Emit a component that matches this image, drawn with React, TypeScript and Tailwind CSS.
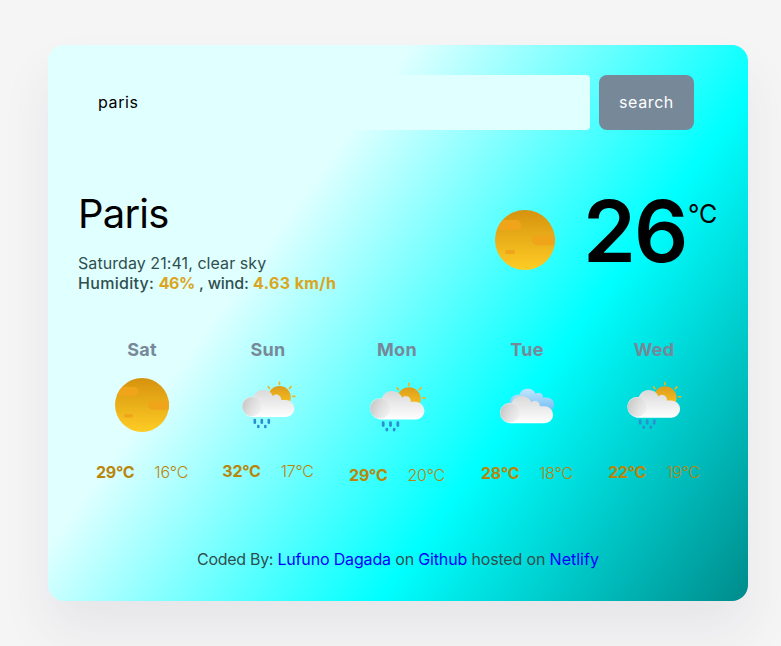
import React from "react";

const CLOUD =
  "M64 141A32 32 0 0 1 36 109A29 29 0 0 1 70 80A31 31 0 0 1 128 78A14.500 14.500 0 0 1 153 90H167A25.500 25.500 0 0 1 167 141Z";

function SunIcon({ id, size }: { id: string; size: number }) {
  return (
    <svg width={size} height={size} viewBox="0 0 100 100" className="block shrink-0">
      <defs>
        <linearGradient id={`${id}-sun`} x1="0" y1="0" x2="0" y2="1">
          <stop offset="0" stopColor="#d6920e" />
          <stop offset="1" stopColor="#fecd25" />
        </linearGradient>
        <clipPath id={`${id}-clip`}>
          <circle cx="50" cy="50" r="30" />
        </clipPath>
      </defs>
      <circle cx="50" cy="50" r="30" fill={`url(#${id}-sun)`} />
      <g clipPath={`url(#${id}-clip)`} fill="#efa41a">
        <rect x="15" y="30" width="31" height="10" rx="5" />
        <rect x="57" y="45.500" width="30" height="9.700" rx="4.800" />
        <rect x="30" y="60" width="10" height="4" rx="2" />
      </g>
    </svg>
  );
}

function CloudDefs({ id }: { id: string }) {
  return (
    <defs>
      <linearGradient id={`${id}-cloud`} x1="0" y1="0" x2="0" y2="1">
        <stop offset="0" stopColor="#d9d9d9" />
        <stop offset="1" stopColor="#ffffff" />
      </linearGradient>
      <linearGradient id={`${id}-shade`} x1="0" y1="0.300" x2="1" y2="0.600">
        <stop offset="0" stopColor="#c6c6c6" />
        <stop offset="1" stopColor="#e6e6e6" stopOpacity="0.400" />
      </linearGradient>
      <linearGradient id={`${id}-sun`} x1="0" y1="0" x2="0" y2="1">
        <stop offset="0" stopColor="#dd9c1c" />
        <stop offset="1" stopColor="#fdc921" />
      </linearGradient>
      <linearGradient id={`${id}-blue`} x1="0" y1="0" x2="0" y2="1">
        <stop offset="0" stopColor="#c4e6fc" />
        <stop offset="1" stopColor="#6cbcf5" />
      </linearGradient>
    </defs>
  );
}

function RainIcon({ id, size }: { id: string; size: number }) {
  return (
    <svg width={size} height={size} viewBox="0 0 100 100" className="block shrink-0">
      <CloudDefs id={id} />
      <g transform="translate(6.900 11.240) scale(0.3745)">
        <circle cx="148" cy="82" r="34" fill={`url(#${id}-sun)`} />
        <g stroke="#f0b323" strokeWidth="5" strokeLinecap="round">
          <path d="M148 37v6M114 50l4 5M183 50l-5 5M188 79h6" />
        </g>
        <path d={CLOUD} fill={`url(#${id}-cloud)`} />
        <circle cx="65" cy="110" r="28.500" fill={`url(#${id}-shade)`} />
        <g fill="#2c8fd1">
          <rect x="70" y="146" width="8" height="16" rx="4" />
          <rect x="91" y="146" width="8" height="16" rx="4" />
          <rect x="112" y="146" width="8" height="16" rx="4" />
          <rect x="80.500" y="164.500" width="8" height="10.500" rx="4" />
          <rect x="101.500" y="164.500" width="8" height="10.500" rx="4" />
        </g>
      </g>
    </svg>
  );
}

function CloudsIcon({ id, size }: { id: string; size: number }) {
  return (
    <svg width={size} height={size} viewBox="0 0 100 100" className="block shrink-0">
      <CloudDefs id={id} />
      <g transform="translate(8.800 10.990) scale(0.3663)">
        <g transform="translate(28.500 6) scale(0.850)">
          <path d={CLOUD} fill={`url(#${id}-blue)`} />
        </g>
        <g transform="translate(-6.500 19) scale(1.018 1)">
          <path d={CLOUD} fill={`url(#${id}-cloud)`} />
          <circle cx="65" cy="110" r="28.500" fill={`url(#${id}-shade)`} />
        </g>
      </g>
    </svg>
  );
}

const days = [
  { day: "Sat", high: 29, low: 16, size: 90, width: "w-[128px]", Icon: SunIcon },
  { day: "Sun", high: 32, low: 17, size: 89, width: "w-[124px]", Icon: RainIcon },
  { day: "Mon", high: 29, low: 20, size: 93, width: "w-[134px]", Icon: RainIcon },
  { day: "Tue", high: 28, low: 18, size: 91, width: "w-[126px]", Icon: CloudsIcon },
  { day: "Wed", high: 22, low: 19, size: 90, width: "w-[128px]", Icon: RainIcon },
];

export default function App() {
  return (
    <div className="h-[646px] w-[781px] overflow-hidden bg-[#f5f5f5] pt-[45px] pl-[48px] font-['Inter',sans-serif] text-base leading-5 text-black">
      <main className="flex h-[556px] w-[700px] flex-col rounded-2xl bg-[linear-gradient(126deg,lightcyan_33%,aqua_66.500%,darkcyan)] px-[30px] pt-[30px] shadow-[0_30px_50px_rgba(65,50,100,0.08)]">
        <form className="flex h-[55px] gap-[9px]" onSubmit={(e) => e.preventDefault()}>
          <input
            type="text"
            defaultValue="paris"
            className="w-[512px] rounded-[4px] bg-[#e0ffff] px-5 pb-0.5 tracking-[0.600px] outline-none"
          />
          <button className="w-[95px] rounded-[8px] bg-[#778899] pb-0.5 tracking-[0.600px] text-white">search</button>
        </form>

        <section className="flex h-[206px] justify-between pt-[54px]">
          <div className="text-[darkslategray]">
            <h1 className="h-[69px] text-[40px] leading-[60px] tracking-[-0.800px] text-black">Paris</h1>
            <p className="tracking-[0.070px] whitespace-nowrap">Saturday 21:41, clear sky</p>
            <p className="font-medium whitespace-nowrap">
              <span className="tracking-[0.300px]">Humidity: </span>
              <strong className="font-bold tracking-[-0.500px] text-[goldenrod]">46%</strong>
              <span className="tracking-[-0.100px]"> , wind: </span>
              <strong className="font-bold tracking-[0.400px] text-[goldenrod]">4.63 km/h</strong>
            </p>
          </div>
          <div className="flex w-[243px]">
            <div className="pt-[6px]">
              <SunIcon id="now" size={100} />
            </div>
            <div className="ml-[8px] flex">
              <span className="w-[105px] pt-[1px] text-[85px] leading-[94px] font-semibold tracking-[-2px]">26</span>
              <span className="pt-[15px] text-[25px] leading-[30px]">°C</span>
            </div>
          </div>
        </section>

        <section className="flex h-[208px]">
          {days.map(({ day, high, low, size, width, Icon }) => (
            <div key={day} className={`flex flex-col items-center pt-[3px] ${width}`}>
              <h2 className="h-[21px] text-lg leading-[21px] font-bold tracking-[0.300px] text-[#778899]">{day}</h2>
              <Icon id={day} size={size} />
              <div className="flex gap-5 pt-3 tracking-[-0.250px] whitespace-nowrap text-[darkgoldenrod]">
                <strong className="font-bold">{high}°C</strong>
                <span className="font-light">{low}°C</span>
              </div>
            </div>
          ))}
        </section>

        <footer className="pt-[5px] text-center tracking-[-0.160px] whitespace-nowrap text-[darkslategray]">
          <span className="tracking-[-0.300px]">Coded By: </span>
          <a className="text-[blue]">Lufuno Dagada</a> on <a className="text-[blue]">Github</a> hosted on{" "}
          <a className="tracking-[0px] text-[blue]">Netlify</a>
        </footer>
      </main>
    </div>
  );
}
